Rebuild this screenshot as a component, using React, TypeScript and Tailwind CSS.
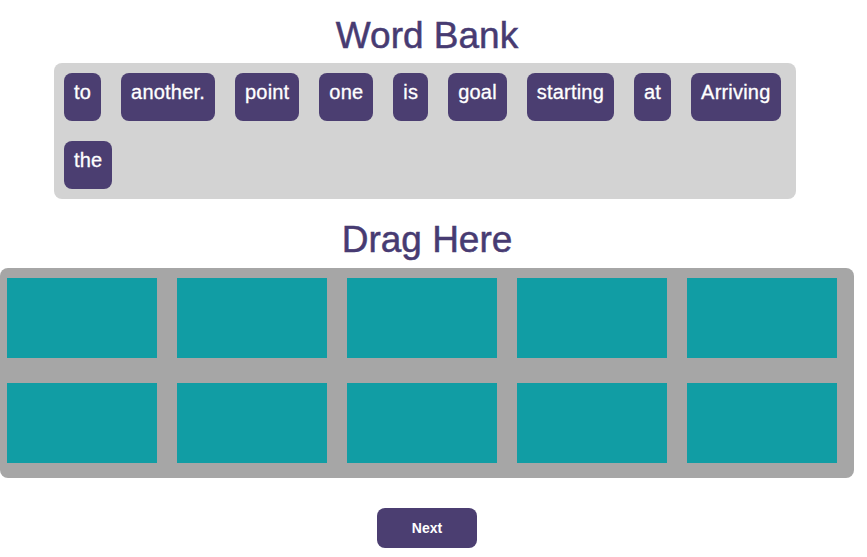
import React from "react";

const words = ["to", "another.", "point", "one", "is", "goal", "starting", "at", "Arriving", "the"];

function Chip({ word }: { word: string }) {
  return (
    <div className="m-[10px] h-[48px] rounded-[8px] bg-[#4b3e71] px-[10px] pt-[7px] text-[20px] leading-[24px] tracking-[0.2px] text-white [-webkit-text-stroke:0.3px_#ffffff]">
      {word}
    </div>
  );
}

export default function App() {
  return (
    <div
      className="w-[854px] bg-white pb-[10px]"
      style={{ fontFamily: '"Liberation Sans", Arial, sans-serif' }}
    >
      <h1 className="pt-[15px] text-center text-[37px] leading-[41px] text-[#473b72] [-webkit-text-stroke:0.5px_#473b72]">
        Word Bank
      </h1>

      <div className="ml-[54px] mt-[7px] flex w-[742px] flex-wrap rounded-[8px] bg-[#d3d3d3]">
        {words.map((w) => (
          <Chip key={w} word={w} />
        ))}
      </div>

      <h2 className="mt-[20px] text-center text-[37px] leading-[41px] text-[#473b72] [-webkit-text-stroke:0.5px_#473b72]">
        Drag Here
      </h2>

      <div className="mt-[8px] grid grid-cols-5 gap-x-[20px] gap-y-[25px] rounded-[8px] bg-[#a6a6a6] pb-[15px] pl-[7px] pr-[17px] pt-[10px]">
        {Array.from({ length: 10 }).map((_, i) => (
          <div key={i} className="h-[80px] bg-[#119da4]" />
        ))}
      </div>

      <div className="mt-[30px] flex justify-center">
        <button className="h-[40px] w-[100px] rounded-[8px] bg-[#4b3e71] text-[14px] font-bold text-white">
          Next
        </button>
      </div>
    </div>
  );
}
